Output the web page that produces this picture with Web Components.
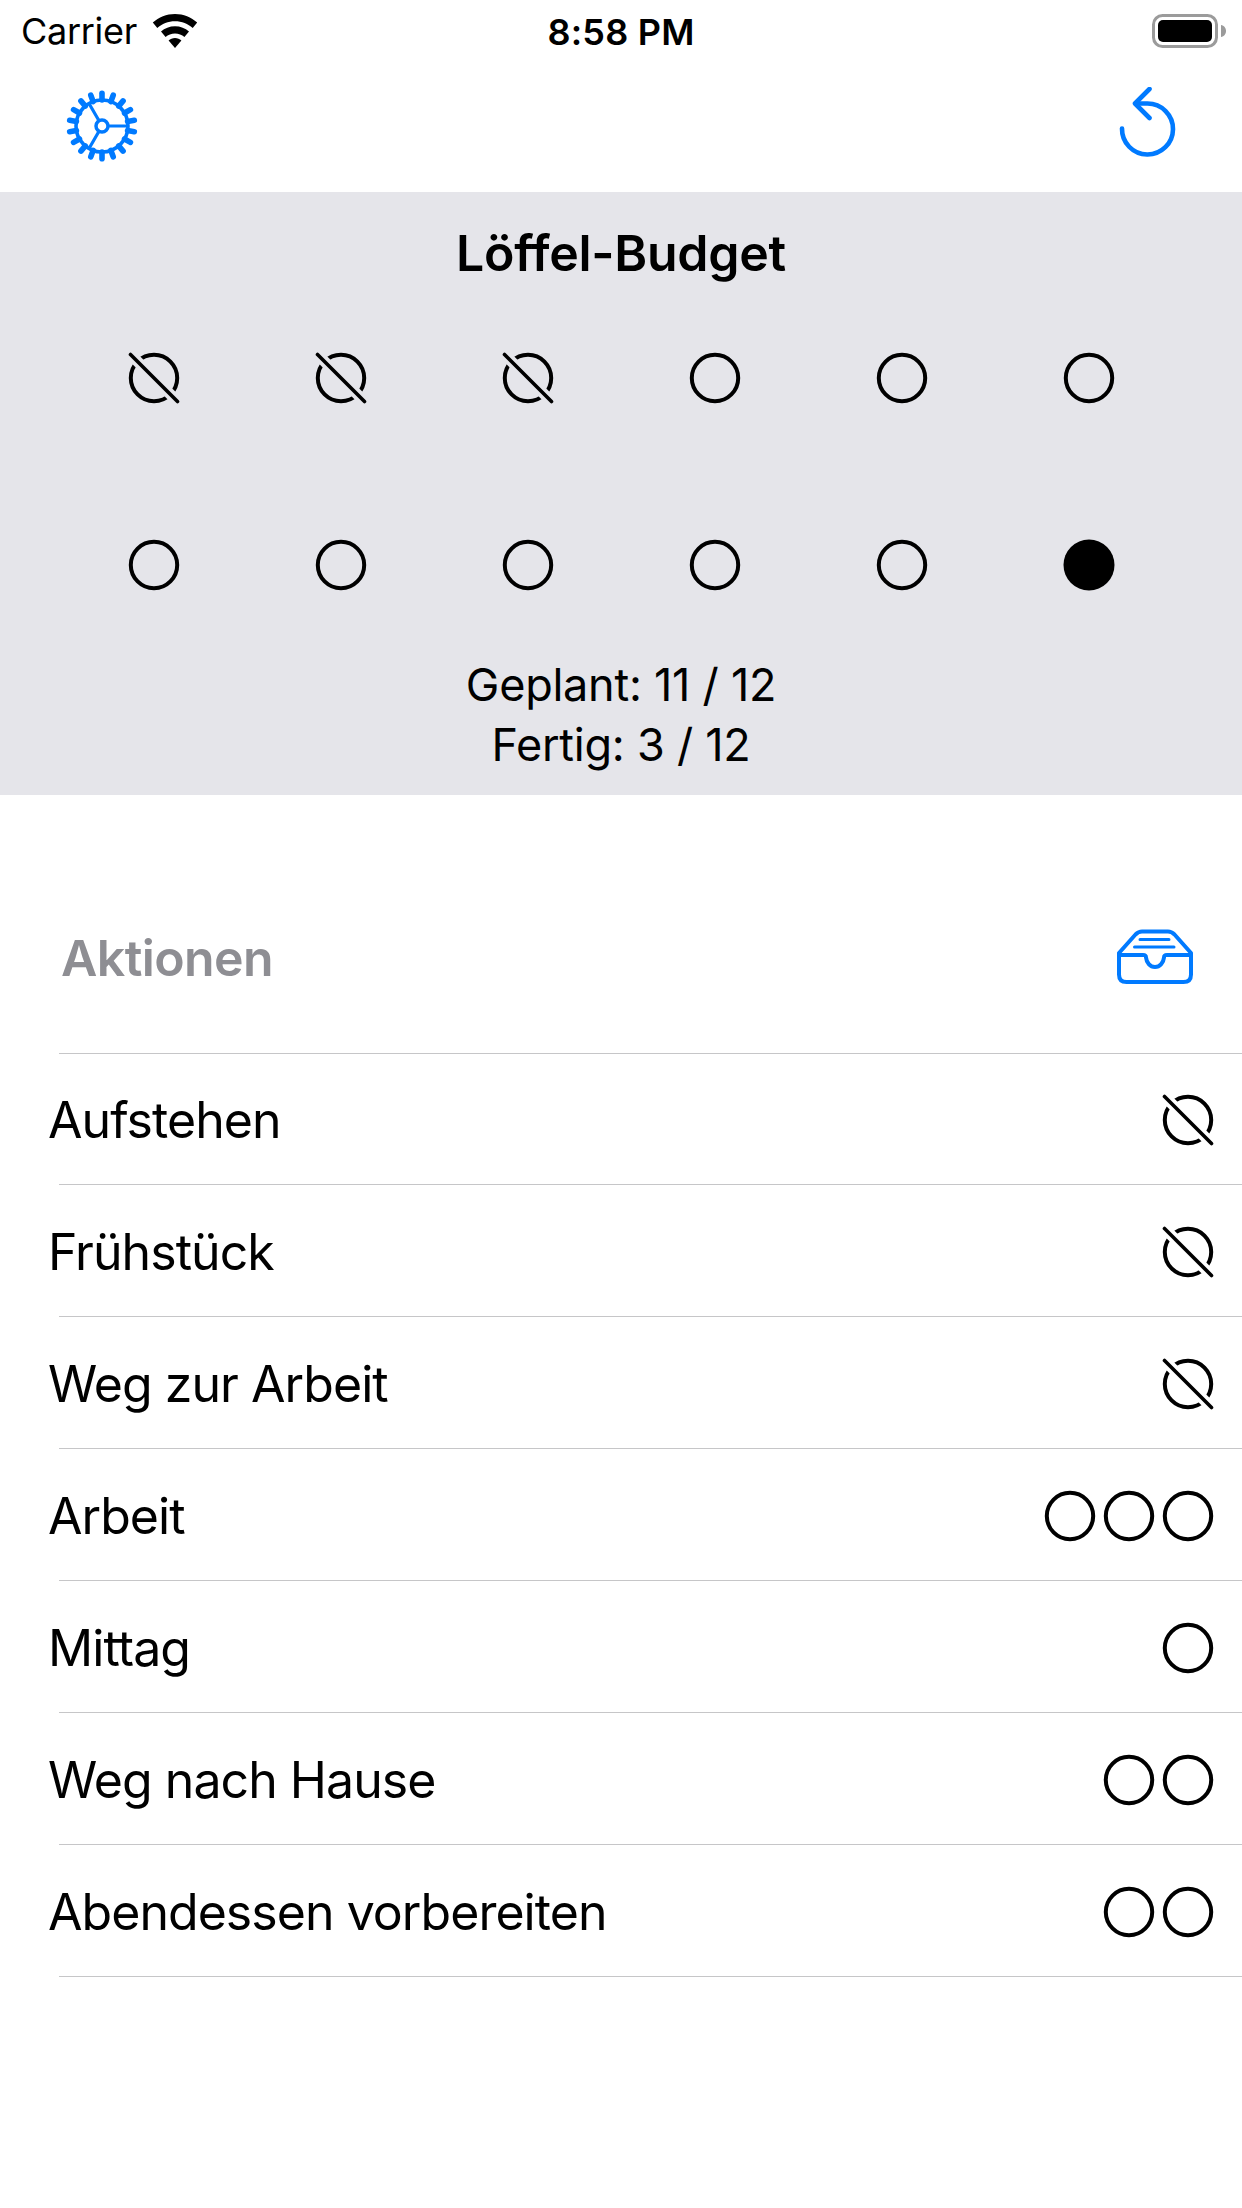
<!DOCTYPE html>
<html lang="de"><head><meta charset="utf-8"><title>Löffel-Budget</title>
<style>
html,body{margin:0;padding:0;background:#fff}
body{width:1242px;height:2208px;overflow:hidden;font-family:Inter,"Liberation Sans",sans-serif;color:#000}
</style></head><body>
<app-screen>
  <status-bar></status-bar>
  <nav-bar></nav-bar>
  <budget-panel title="Löffel-Budget" planned="Geplant: 11 / 12" done="Fertig: 3 / 12" states="off off off empty empty empty empty empty empty empty empty full"></budget-panel>
  <action-list title="Aktionen">
    <action-row label="Aufstehen" states="off"></action-row>
    <action-row label="Frühstück" states="off"></action-row>
    <action-row label="Weg zur Arbeit" states="off"></action-row>
    <action-row label="Arbeit" states="empty empty empty"></action-row>
    <action-row label="Mittag" states="empty"></action-row>
    <action-row label="Weg nach Hause" states="empty empty"></action-row>
    <action-row label="Abendessen vorbereiten" states="empty empty"></action-row>
  </action-list>
</app-screen>
<script>
let maskId=0;
function el(name,css,html){
  customElements.define(name,class extends HTMLElement{
    connectedCallback(){
      if(this.shadowRoot)return;
      const s=this.attachShadow({mode:'open'});
      s.innerHTML='<style>'+css+'</style>'+(typeof html==='function'?html(this):html);
    }
  });
}
el('app-screen',':host{display:flex;flex-direction:column;width:1242px}','<slot></slot>');

el('status-bar',`:host{display:flex;align-items:center;justify-content:space-between;height:60px;position:relative;box-sizing:border-box;padding:2px 16px 0 21px}
.l{display:flex;align-items:center;gap:15px;font-size:36px;letter-spacing:-.3px}
.t{position:absolute;left:0;right:0;text-align:center;font-size:36px;font-weight:600;letter-spacing:.2px;line-height:60px;top:2px}
svg{display:block}`,`<div class="l"><span>Carrier</span>
<svg width="46" height="34" viewBox="0 0 46 34"><path d="M23 0C14.500 0 6.700 3.300 .8 8.600l4.500 5.300C10 9.700 16.200 7.200 23 7.200s13 2.500 17.700 6.700l4.500-5.300C39.300 3.300 31.500 0 23 0z"/><path d="M23 12.200c-5.400 0-10.300 2-14 5.400l4.600 5.300c2.500-2.200 5.800-3.500 9.400-3.500s6.900 1.300 9.400 3.500l4.600-5.300c-3.700-3.400-8.600-5.400-14-5.400z"/><path d="M23 24c-2.500 0-4.700 .9-6.400 2.400L23 34l6.400-7.600C27.700 24.900 25.500 24 23 24z"/></svg></div>
<div class="t">8:58 PM</div>
<svg width="74" height="34" viewBox="0 0 74 34"><rect x="1.500" y="1.500" width="63" height="31" rx="9" fill="none" stroke="#9b9b9b" stroke-width="3"/><rect x="6" y="6" width="54" height="22" rx="5"/><path d="M69 11c3 .5 5 3 5 6s-2 5.500-5 6z" fill="#9b9b9b"/></svg>`);

el('nav-bar',`:host{display:flex;justify-content:space-between;height:132px;box-sizing:border-box;padding:0 63px 0 66px;align-items:center}
svg{display:block}`,()=>{
  let teeth='';
  for(let i=0;i<18;i++){teeth+=`<line x1="36" y1="10" x2="36" y2="3.200" transform="rotate(${i*20} 36 36)"/>`;}
  return `<svg width="72" height="72" viewBox="0 0 72 72" fill="none" stroke="#007aff" stroke-width="3.200"><g stroke-width="5.600" stroke-linecap="round">${teeth}</g><circle cx="36" cy="36" r="26" stroke-width="3.600"/><circle cx="36" cy="36" r="6" stroke-width="3.500"/><path d="M42 36H62M33 30.800 22.600 12.800M33 41.200 22.600 59.200"/></svg>
<svg width="60" height="84" viewBox="0 0 60 84" fill="none" stroke="#007aff" stroke-width="4.600" stroke-linecap="round" stroke-linejoin="round" style="margin-top:6px"><path d="M3 41.500A25.500 25.500 0 1 0 28.500 16.500H17"/><path d="M30.500 2 16 16.500 30.500 31"/></svg>`});

el('spoon-icon',`:host{display:block;width:52px;height:52px}svg{display:block}`,h=>{
  const s=h.getAttribute('state');
  if(s==='full')return '<svg width="52" height="52" viewBox="0 0 52 52"><circle cx="26" cy="26" r="25.500"/></svg>';
  if(s==='off'){const id='m'+(++maskId);return `<svg width="52" height="52" viewBox="0 0 52 52" fill="none" stroke="#000" stroke-width="4"><mask id="${id}" maskUnits="userSpaceOnUse" x="0" y="0" width="52" height="52"><rect width="52" height="52" fill="#fff" stroke="none"/><path d="M0 0 52 52" stroke="#000" stroke-width="11"/></mask><circle cx="26" cy="26" r="23.200" mask="url(#${id})"/><path d="M2.500 2.500 49.500 49.500" stroke-width="3.600" stroke-linecap="round"/></svg>`;}
  return '<svg width="52" height="52" viewBox="0 0 52 52" fill="none" stroke="#000" stroke-width="4"><circle cx="26" cy="26" r="23.200"/></svg>';
});

el('budget-panel',`:host{display:block;background:#e5e5ea;height:603px;box-sizing:border-box;padding-top:33px;text-align:center}
h1{margin:0;font-size:50px;font-weight:600;line-height:56px;letter-spacing:-.28px}
.g{display:grid;grid-template-columns:repeat(6,187px);grid-auto-rows:187px;margin:3px 0 0 60px;justify-items:center;align-items:center}
p{margin:0;font-size:45px;line-height:60px;letter-spacing:-.25px}
.t{margin-top:-3px}`,h=>`<h1>${h.getAttribute('title')}</h1>
<div class="g">${h.getAttribute('states').split(' ').map(s=>`<spoon-icon state="${s}"></spoon-icon>`).join('')}</div>
<div class="t"><p>${h.getAttribute('planned')}</p><p>${h.getAttribute('done')}</p></div>`);

el('action-list',`:host{display:block}
.h{display:flex;align-items:center;justify-content:space-between;height:258px;box-sizing:border-box;padding:68px 48px 0 61px;position:relative}
.h:after{content:"";position:absolute;left:59px;right:0;bottom:-1px;height:1px;background:#c6c6c8}
h2{margin:0;font-size:50px;font-weight:600;color:#8e8e93;letter-spacing:-.6px}
svg{display:block;margin-top:-3px}`,h=>`<div class="h"><h2>${h.getAttribute('title')}</h2>
<svg width="78" height="56" viewBox="0 0 78 56" fill="none" stroke="#007aff" stroke-width="4" stroke-linecap="round" stroke-linejoin="round"><path d="M3 24 19.500 5.500Q22.500 2.500 26 2.500H52Q55.500 2.500 58.500 5.500L75 24V45.500Q75 53 67.500 53H10.500Q3 53 3 45.500V24Z"/><path d="M3 26H27C29 26 30 26.500 30 28.500 30.500 33.500 34 38 39 38S47.500 33.500 48 28.500C48 26.500 49 26 51 26H75"/><path d="M24 10.500H53M18.500 18H58" stroke-width="3"/></svg></div><slot></slot>`);

el('action-row',`:host{display:flex;align-items:center;justify-content:space-between;height:132px;box-sizing:border-box;padding:2px 28px 0 48px;position:relative}
.s{position:absolute;left:59px;right:0;bottom:0;height:1px;background:#c6c6c8}
span{font-size:50px;letter-spacing:-.95px}
.i{display:flex;gap:7px}`,h=>`<span>${h.getAttribute('label')}</span><div class="i">${h.getAttribute('states').split(' ').map(s=>`<spoon-icon state="${s}"></spoon-icon>`).join('')}</div><div class="s"></div>`);
</script>
</body></html>
